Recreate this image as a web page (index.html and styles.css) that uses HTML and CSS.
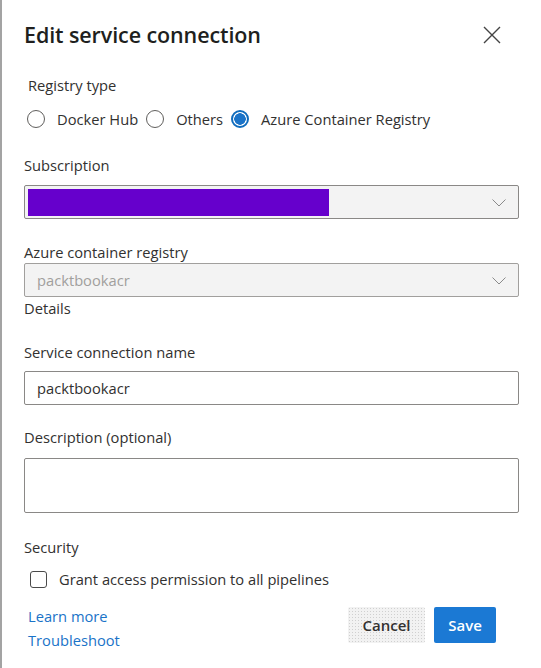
FILE: index.html
```html
<!DOCTYPE html>
<html lang="en">
<head>
<meta charset="utf-8">
<title>Edit service connection</title>
<link rel="stylesheet" href="styles.css">
</head>
<body>
<div class="panel">
  <div class="header">
    <h1 class="title">Edit service connection</h1>
    <button class="close" aria-label="Close">
      <svg width="18" height="18" viewBox="0 0 18 18"><path d="M1 1 L17 17 M17 1 L1 17" stroke="#444" stroke-width="1.4" fill="none"/></svg>
    </button>
  </div>

  <div class="label label-indent reg-label">Registry type</div>
  <div class="radios">
    <label class="radio"><span class="circle"></span><span class="rtext">Docker Hub</span></label>
    <label class="radio"><span class="circle"></span><span class="rtext">Others</span></label>
    <label class="radio"><span class="circle checked"></span><span class="rtext">Azure Container Registry</span></label>
  </div>

  <div class="label sub-label">Subscription</div>
  <div class="dropdown">
    <div class="redacted"></div>
    <svg class="chev" width="14" height="8" viewBox="0 0 14 8"><path d="M0.5 0.5 L7 7 L13.5 0.5" stroke="#8a8a8a" stroke-width="1" fill="none"/></svg>
  </div>

  <div class="label acr-label">Azure container registry</div>
  <div class="dropdown disabled">
    <span class="dtext">packtbookacr</span>
    <svg class="chev" width="14" height="8" viewBox="0 0 14 8"><path d="M0.5 0.5 L7 7 L13.5 0.5" stroke="#8a8a8a" stroke-width="1" fill="none"/></svg>
  </div>
  <div class="label details">Details</div>

  <div class="label name-label">Service connection name</div>
  <div class="input">packtbookacr</div>

  <div class="label desc-label">Description (optional)</div>
  <div class="textarea"></div>

  <div class="label sec-label">Security</div>
  <label class="check-row"><span class="checkbox"></span><span class="ctext">Grant access permission to all pipelines</span></label>

  <div class="footer">
    <div class="links">
      <a class="link">Learn more</a>
      <a class="link">Troubleshoot</a>
    </div>
    <div class="buttons">
      <button class="btn cancel">Cancel</button>
      <button class="btn save">Save</button>
    </div>
  </div>
</div>
</body>
</html>
```

FILE: styles.css
```css
* { box-sizing: border-box; }
html, body { margin: 0; padding: 0; background: #fff; }
body {
  font-family: "Open Sans", "Noto Sans", sans-serif;
  font-size: 14.7px;
  color: #323130;
}
.panel {
  width: 541px;
  height: 668px;
  border-left: 2px solid #a3a3a3;
  padding: 21px 22px 0 22px;
}
.header {
  display: flex;
  align-items: center;
  justify-content: space-between;
  height: 28px;
}
.title {
  margin: 0;
  font-size: 21.5px;
  font-weight: 600;
  line-height: 28px;
  color: #201f1e;
  letter-spacing: -0.1px;
}
.close {
  border: 0;
  background: none;
  padding: 0;
  margin-right: 18px;
  width: 18px;
  height: 18px;
  display: flex;
}
.label {
  line-height: 20px;
  height: 20px;
  color: #323130;
}
.label-indent { padding-left: 4px; }
.reg-label { margin-top: 26px; }
.radios {
  display: flex;
  align-items: center;
  margin-top: 14px;
  height: 20px;
  padding-left: 3px;
}
.radio {
  display: flex;
  align-items: center;
  margin-right: 8px;
}
.circle {
  width: 18px;
  height: 18px;
  border-radius: 50%;
  border: 1px solid #5f5e5c;
  background: #fff;
  margin-right: 12px;
  flex: none;
}
.circle.checked {
  border: 2px solid #0f6cbd;
  background: radial-gradient(circle, #1a73c8 0 5.5px, #fff 6px);
}
.rtext { color: #323130; white-space: nowrap; }
.sub-label { margin-top: 26px; }
.dropdown {
  margin-top: 10px;
  height: 34px;
  border: 1px solid #8a8886;
  border-radius: 2px;
  background: #f3f3f3;
  display: flex;
  align-items: center;
  padding: 0 12px 0 3px;
  justify-content: space-between;
}
.redacted {
  width: 301px;
  height: 27px;
  background: #6600cc;
}
.chev { flex: none; margin-top: 1px; }
.acr-label { margin-top: 23px; }
.dropdown.disabled {
  margin-top: 1px;
  border-color: #a19f9d;
  padding-left: 12px;
}
.dtext { color: #a19f9d; }
.details { margin-top: 1px; }
.name-label { margin-top: 24px; }
.input {
  margin-top: 9px;
  height: 34px;
  border: 1px solid #8a8886;
  border-radius: 2px;
  padding: 0 12px;
  line-height: 32px;
  color: #323130;
}
.desc-label { margin-top: 22px; }
.textarea {
  margin-top: 11px;
  height: 55px;
  border: 1px solid #8a8886;
  border-radius: 2px;
}
.sec-label { margin-top: 24px; }
.check-row {
  display: flex;
  align-items: center;
  margin-top: 12px;
  height: 20px;
  padding-left: 6px;
}
.checkbox {
  width: 17px;
  height: 17px;
  border: 1px solid #4a4a4a;
  border-radius: 3px;
  margin-right: 12px;
  flex: none;
}
.footer {
  display: flex;
  justify-content: space-between;
  align-items: flex-start;
  margin-top: 18px;
  padding-right: 23px;
}
.links {
  display: flex;
  flex-direction: column;
  padding-left: 4px;
  margin-top: -3px;
}
.link {
  color: #1a73c8;
  line-height: 24px;
  text-decoration: none;
}
.buttons {
  display: flex;
  gap: 9px;
}
.btn {
  height: 36px;
  border: 0;
  border-radius: 2px;
  font-family: "Open Sans", "Noto Sans", sans-serif;
  font-size: 15px;
  font-weight: 600;
  padding: 0;
}
.cancel {
  width: 77px;
  color: #323130;
  background-color: #f2f2f2;
  background-image: radial-gradient(#d0d0d0 0.7px, transparent 0.8px);
  background-size: 3px 3px;
}
.save {
  width: 62px;
  color: #fff;
  background: #1b79d4;
}
```
